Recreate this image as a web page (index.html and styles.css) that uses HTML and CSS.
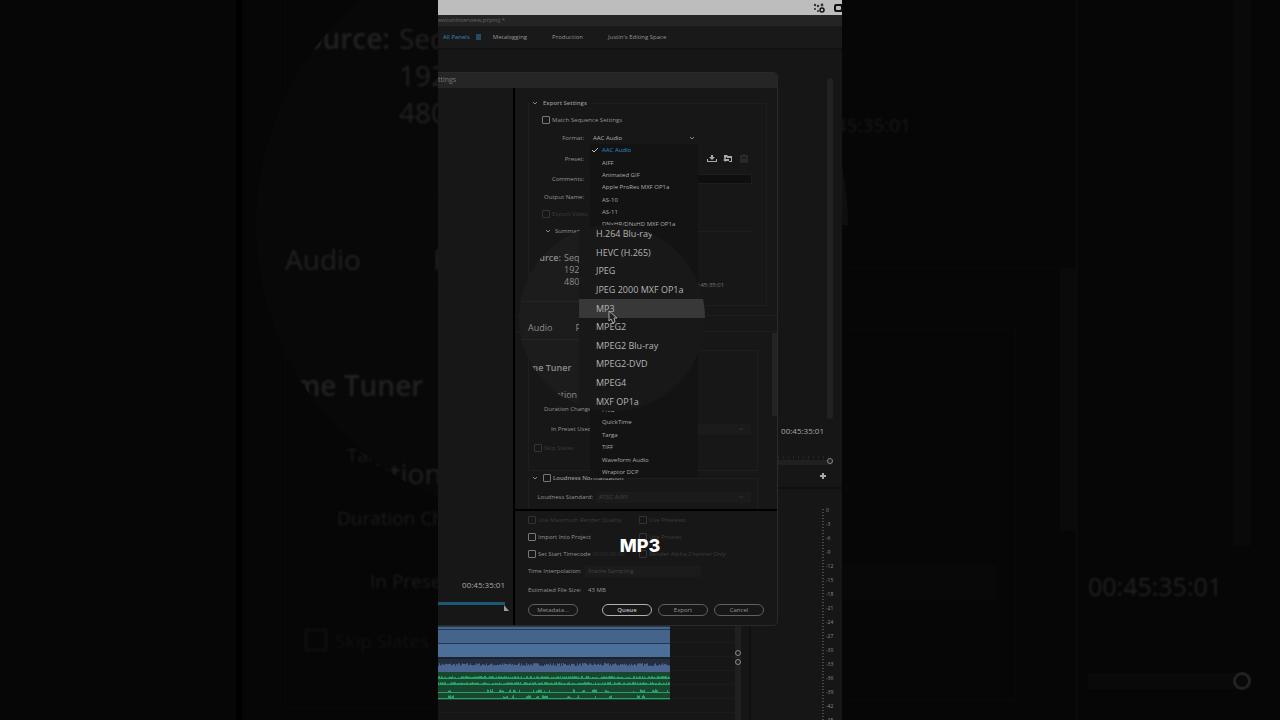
FILE: index.html
```
<!DOCTYPE html>
<html lang="en">
<head>
    <meta charset="UTF-8">
    <meta name="viewport" content="width=device-width, initial-scale=1.0">
    <title>Export Settings</title>
    <link rel="stylesheet" href="styles.css">
</head>
<body>
    <div class="page">
        <aside class="side side-left" aria-hidden="true">
            <div class="side-pane"></div>
            <div class="side-form">
                <div class="side-row target">Target</div>
                <div class="side-row duration">Duration Change:</div>
                <div class="side-row preset">In Preset Used:</div>
                <div class="side-row slates"><span class="side-box"></span>Skip Slates</div>
            </div>
            <div class="side-lens">
                <div class="side-source"><b>Source:</b><span>Sequence</span><span></span><span>1920x1080</span><span></span><span>48000 Hz</span></div>
                <div class="side-tabs"><span>Audio</span><span>Publish</span></div>
                <div class="side-tuner">Time Tuner</div>
                <div class="side-ration">Duration</div>
            </div>
        </aside>

        <main class="stage">
            <div class="menubar">
                <svg width="12" height="12" viewBox="0 0 12 12">
                    <g fill="#333"><circle cx="2" cy="3" r="1.2"/><circle cx="5" cy="4" r="1.2"/><circle cx="9" cy="3" r="1.4"/><circle cx="2" cy="7" r="1.1"/><circle cx="5" cy="9" r="1.1"/></g>
                    <circle cx="9" cy="8" r="2" fill="none" stroke="#111" stroke-width="1.5"/>
                </svg>
                <svg width="9" height="12" viewBox="0 0 9 12">
                    <rect x="1" y="2" width="12" height="8" rx="2" fill="#111"/>
                    <rect x="3" y="4" width="5" height="4" rx="1" fill="#bbb"/>
                </svg>
            </div>
            <div class="titlebar">ewtonInterview.prproj *</div>
            <nav class="workspaces">
                <a href="#all" class="active">All Panels
                    <svg width="5" height="6" viewBox="0 0 5 6"><path d="M0 1h5M0 3h5M0 5h5" stroke="#2c7fb0"/></svg>
                </a>
                <a href="#metalogging">Metalogging</a>
                <a href="#production">Production</a>
                <a href="#justin">Justin's Editing Space</a>
            </nav>
            <section class="monitor">
                <div class="monitor-scroll"></div>
                <div class="timecode">00:45:35:01</div>
                <div class="ruler"><span class="ring"></span></div>
                <button class="plus" aria-label="Button editor">
                    <svg width="8" height="8" viewBox="0 0 8 8"><path d="M4 1v6M1 4h6" stroke="#aaa" stroke-width="2"/></svg>
                </button>
            </section>
            <section class="lower">
                <div class="timeline">
                    <div class="clips">
                        <div class="clip thin"></div>
                        <div class="clip video"></div>
                        <div class="clip video second"></div>
                        <div class="clip-gap"></div>
                        <svg class="wave" id="wave" viewBox="0 0 232 41" preserveAspectRatio="none"></svg>
                    </div>
                </div>
                <div class="track-scroll"><span class="ring"></span><span class="ring"></span></div>
                <div class="meter">
                    <div class="ticks"></div>
                    <ol>
                        <li>0</li><li>-3</li><li>-6</li><li>-9</li><li>-12</li><li>-15</li><li>-18</li><li>-21</li>
                        <li>-24</li><li>-27</li><li>-30</li><li>-33</li><li>-36</li><li>-39</li><li>-42</li><li>-45</li>
                    </ol>
                </div>
            </section>

            <div class="dialog" role="dialog" aria-label="Export Settings">
                <div class="dialog-title">ttings</div>
                <div class="dialog-body">
                    <div class="source">
                        <div class="timecode">00:45:35:01</div>
                        <div class="range"></div>
                        <svg class="handle" width="5" height="6" viewBox="0 0 5 6"><path d="M0 0l5 6H0z" fill="#999"/></svg>
                    </div>
                    <div class="settings">
                        <div class="scroll">
                            <fieldset class="export">
                                <legend><svg class="chev" width="6" height="4" viewBox="0 0 6 4"><path d="M1 1l2 2 2-2"/></svg>Export Settings</legend>
                                <label class="check"><input type="checkbox">Match Sequence Settings</label>
                                <div class="field">
                                    <label for="format">Format:</label>
                                    <select id="format" class="format"><option>AAC Audio</option></select>
                                    <svg class="chev select-chev" width="6" height="4" viewBox="0 0 6 4"><path d="M1 1l2 2 2-2"/></svg>
                                </div>
                                <div class="field">
                                    <label for="preset">Preset:</label>
                                    <select id="preset" class="hidden-field"><option></option></select>
                                    <div class="icons">
                                        <svg width="10" height="9" viewBox="0 0 10 9"><path d="M4 1h2v2h2L5 6 2 3h2z" fill="#aaa"/><path d="M0 5h1v2h8V5h1v3H0z" fill="#aaa"/></svg>
                                        <svg width="10" height="9" viewBox="0 0 10 9"><path d="M1 1h3l1 1h4v6H6V7h2V4H4V3L1 5z" fill="#aaa"/><path d="M0 6l3-2v1h3v2H3v1z" fill="#aaa"/></svg>
                                        <svg width="10" height="9" viewBox="0 0 10 9"><path d="M1 2h8M4 1h2M2 2v6h6V2M4 4v3M6 4v3" fill="none" stroke="#3a3a3a"/></svg>
                                    </div>
                                </div>
                                <div class="field">
                                    <label for="comments">Comments:</label>
                                    <input type="text" id="comments" class="comments">
                                </div>
                                <div class="field"><label>Output Name:</label></div>
                                <label class="check off"><input type="checkbox" disabled>Export Video</label>
                                <div class="summary"><svg class="chev" width="6" height="4" viewBox="0 0 6 4"><path d="M1 1l2 2 2-2"/></svg>Summary</div>
                                <div class="length">00:45:35:01</div>
                            </fieldset>
                            <div class="tabs"></div>
                            <div class="audio">
                                <fieldset class="tuner">
                                    <div class="field"><label>Target</label></div>
                                    <div class="field"><label>Duration Change:</label></div>
                                    <div class="field">
                                        <label for="used">In Preset Used:</label>
                                        <select id="used" class="faint-select" disabled><option></option></select>
                                        <svg class="chev select-chev faint" width="6" height="4" viewBox="0 0 6 4"><path d="M1 1l2 2 2-2"/></svg>
                                    </div>
                                    <label class="check off"><input type="checkbox" disabled>Skip Slates</label>
                                </fieldset>
                                <fieldset class="loudness">
                                    <legend><svg class="chev" width="6" height="4" viewBox="0 0 6 4"><path d="M1 1l2 2 2-2"/></svg><label class="tick"><input type="checkbox">Loudness Normalization</label></legend>
                                    <div class="field">
                                        <label for="standard">Loudness Standard:</label>
                                        <select id="standard" class="faint-select" disabled><option>ATSC A/85</option></select>
                                        <svg class="chev select-chev faint" width="6" height="4" viewBox="0 0 6 4"><path d="M1 1l2 2 2-2"/></svg>
                                    </div>
                                </fieldset>
                                <div class="audio-scroll"></div>
                            </div>
                        </div>
                        <div class="bottom">
                            <div class="options">
                                <label class="tick off"><input type="checkbox" disabled>Use Maximum Render Quality</label>
                                <label class="tick off"><input type="checkbox" disabled>Use Previews</label>
                                <label class="tick"><input type="checkbox">Import Into Project</label>
                                <label class="tick off"><input type="checkbox" disabled>Use Proxies</label>
                                <label class="tick"><input type="checkbox">Set Start Timecode <span class="dim">00:00:00:00</span></label>
                                <label class="tick off"><input type="checkbox" disabled>Render Alpha Channel Only</label>
                            </div>
                            <div class="interpolation">
                                <label for="interp">Time Interpolation:</label>
                                <select id="interp" class="faint-select" disabled><option>Frame Sampling</option></select>
                            </div>
                            <div class="size"><span>Estimated File Size:</span><span>43 MB</span></div>
                            <div class="buttons">
                                <button class="meta">Metadata...</button>
                                <button class="queue">Queue</button>
                                <button>Export</button>
                                <button>Cancel</button>
                            </div>
                        </div>
                    </div>
                </div>
            </div>

            <ul class="menu">
                <li class="selected"><svg width="6" height="6" viewBox="0 0 6 6"><path d="M0 3l2 2 4-4" fill="none" stroke="#bbb"/></svg>AAC Audio</li>
                <li>AIFF</li>
                <li>Animated GIF</li>
                <li>Apple ProRes MXF OP1a</li>
                <li>AS-10</li>
                <li>AS-11</li>
                <li>DNxHR/DNxHD MXF OP1a</li>
                <li>DPX</li>
                <li>GIF</li>
                <li>H.264</li>
                <li>H.264 Blu-ray</li>
                <li>HEVC (H.265)</li>
                <li>JPEG</li>
                <li>JPEG 2000 MXF OP1a</li>
                <li>MP3</li>
                <li>MPEG2</li>
                <li>MPEG2 Blu-ray</li>
                <li>MPEG2-DVD</li>
                <li>MPEG4</li>
                <li>MXF OP1a</li>
                <li>OpenEXR</li>
                <li>PNG</li>
                <li>QuickTime</li>
                <li>Targa</li>
                <li>TIFF</li>
                <li>Waveform Audio</li>
                <li>Wraptor DCP</li>
            </ul>

            <div class="lens">
                <div class="lens-left">
                    <div class="lens-source"><b>Source:</b><span>Sequence</span><span></span><span>1920x1080</span><span></span><span>48000 Hz</span></div>
                    <div class="lens-tabs"><span>Audio</span><span>Publish</span></div>
                    <div class="lens-tuner">Time Tuner</div>
                    <div class="lens-duration">Duration</div>
                </div>
                <ul class="lens-menu">
                    <li>H.264 Blu-ray</li>
                    <li>HEVC (H.265)</li>
                    <li>JPEG</li>
                    <li>JPEG 2000 MXF OP1a</li>
                    <li class="hover">MP3</li>
                    <li>MPEG2</li>
                    <li>MPEG2 Blu-ray</li>
                    <li>MPEG2-DVD</li>
                    <li>MPEG4</li>
                    <li>MXF OP1a</li>
                </ul>
                <svg class="cursor" width="10" height="14" viewBox="0 0 10 14"><path d="M1 1v10l2-2 2 4 2-1-1-4h3z" fill="#222" stroke="#aaa"/></svg>
            </div>

            <div class="caption">MP3</div>
        </main>

        <aside class="side side-right" aria-hidden="true">
            <div class="right-dialog">
                <div class="right-export">45:35:01</div>
                <div class="right-audio">
                    <div class="right-box"><div class="right-select"></div></div>
                    <div class="right-scroll"></div>
                </div>
            </div>
            <div class="right-monitor">
                <div class="right-bar"></div>
                <div class="right-time">00:45:35:01</div>
                <div class="right-ruler"><span class="right-ring"></span></div>
            </div>
            <div class="right-lens"></div>
        </aside>
    </div>
    <script src="script.js"></script>
</body>
</html>
```
FILE: styles.css
```
* {
    box-sizing: border-box;
}
body {
    margin: 0;
    background-color: #060606;
    color: #949494;
    font-family: "Open Sans", "Noto Sans", sans-serif;
    font-size: 6px;
    line-height: 10px;
}
ul, ol {
    list-style: none;
    margin: 0;
    padding: 0;
}
a {
    color: inherit;
    text-decoration: none;
}
button, input, select {
    font: inherit;
    color: inherit;
}
.page {
    display: grid;
    grid-template-columns: 438fr 404fr 438fr;
    height: 100vh;
    min-height: 720px;
    overflow: hidden;
}

/* dark enlarged backdrop on both sides */
.side {
    position: relative;
    display: flex;
    overflow: hidden;
    color: #1c1c1c;
    font-size: 19px;
    line-height: 24px;
    white-space: nowrap;
}
.side-row, .side-source, .side-tabs, .side-tuner, .side-ration, .right-time, .right-export {
    filter: blur(1px);
}
.side-pane {
    flex: 0 0 242px;
    border-right: 6px solid #000;
}
.side-form {
    flex: 1;
    margin: 0 0 12px 43px;
    padding-top: 443px;
    border-left: 1px solid #090909;
    border-bottom: 1px solid #090909;
}
.side-row {
    height: 63px;
    display: flex;
    align-items: flex-start;
    gap: 8px;
}
.target {
    padding-left: 61px;
}
.duration {
    padding-left: 51px;
}
.preset {
    padding-left: 84px;
    height: 60px;
}
.slates {
    padding-left: 19px;
    color: #121212;
}
.side-box {
    width: 22px;
    height: 22px;
    border: 2px solid #121212;
}
.side-lens {
    position: absolute;
    left: 256px;
    top: -70px;
    width: 590px;
    height: 590px;
    padding-top: 90px;
    border-radius: 50%;
    overflow: hidden;
    background-color: #080808;
    color: #222;
    font-size: 28px;
    font-weight: 500;
    line-height: 37px;
}
.side-source {
    display: grid;
    grid-template-columns: 134px 1fr;
    grid-auto-rows: 37px;
    column-gap: 9px;
    height: 175px;
    border-bottom: 1px solid #0c0c0c;
}
.side-source b {
    text-align: right;
    font-weight: 600;
}
.side-tabs {
    display: flex;
    gap: 72px;
    height: 88px;
    padding: 46px 0 0 29px;
    border-bottom: 1px solid #0c0c0c;
}
.side-tuner {
    padding: 84px 0 0 14px;
    height: 172px;
    font-weight: 600;
}
.side-ration {
    padding-left: 70px;
}
.right-dialog {
    flex: 0 0 236px;
    border-right: 2px solid #0a0a0a;
}
.right-export {
    display: flex;
    justify-content: flex-end;
    height: 190px;
    width: 195px;
    margin-top: -50px;
    padding: 163px 125px 0 0;
    border: 1px solid #090909;
    border-width: 0 1px 1px 0;
    color: #191919;
}
.right-audio {
    display: flex;
    justify-content: space-between;
    height: 440px;
    margin-top: 128px;
    border-top: 1px solid #090909;
}
.right-box {
    width: 174px;
    height: 372px;
    margin-top: 60px;
    padding-top: 235px;
    border: 1px solid #090909;
    border-left: 0;
}
.right-select {
    width: 154px;
    height: 34px;
    background-color: #080808;
}
.right-scroll {
    width: 16px;
    height: 262px;
    background-color: #0a0a0a;
}
.right-monitor {
    flex: 1;
    padding: 0 29px 0 10px;
    display: flex;
    flex-direction: column;
}
.right-bar {
    align-self: flex-end;
    width: 18px;
    height: 546px;
    background-color: #090909;
}
.right-time {
    height: 78px;
    padding-top: 28px;
    font-size: 25px;
    font-weight: 500;
    color: #222;
}
.right-ruler {
    display: flex;
    align-items: center;
    justify-content: flex-end;
    height: 16px;
    margin-top: 49px;
    background-color: #090909;
}
.right-ring {
    width: 18px;
    height: 18px;
    border: 3px solid #222;
    border-radius: 50%;
}
.right-lens {
    position: absolute;
    left: -584px;
    top: -70px;
    width: 590px;
    height: 295px;
    border-radius: 295px 295px 0 0;
    border-right: 7px solid #0f0f0f;
}

/* editor */
.stage {
    position: relative;
    display: flex;
    flex-direction: column;
    overflow: hidden;
    background-color: #161616;
    white-space: nowrap;
}
.menubar {
    display: flex;
    justify-content: flex-end;
    align-items: center;
    gap: 8px;
    height: 15px;
    flex: none;
    background-color: #bdbdbd;
}
.titlebar {
    height: 11px;
    flex: none;
    background-color: #242424;
    color: #666;
}
.workspaces {
    display: flex;
    align-items: center;
    height: 24px;
    flex: none;
    padding-left: 5px;
    border-bottom: 2px solid #111;
    background-color: #191919;
}
.workspaces a {
    margin-right: 25px;
}
.workspaces .active {
    display: flex;
    align-items: center;
    gap: 6px;
    margin-right: 12px;
    color: #2c8cc4;
}
.monitor {
    display: flex;
    flex-direction: column;
    align-items: flex-end;
    flex: none;
    padding: 28px 9px 0 0;
    height: 439px;
    border-bottom: 2px solid #0f0f0f;
}
.monitor-scroll {
    width: 6px;
    height: 341px;
    border-radius: 3px;
    background-color: #222;
}
.timecode {
    color: #a8a8a8;
    font-size: 8px;
}
.monitor .timecode {
    margin: 7px 9px 20px 0;
}
.ruler {
    display: flex;
    align-items: center;
    justify-content: flex-end;
    width: 55px;
    height: 9px;
    background: repeating-linear-gradient(90deg, #242424 0 1px, transparent 1px 5px) top / 100% 3px no-repeat, linear-gradient(#202020, #202020) bottom / 100% 5px no-repeat;
}
.ring {
    width: 6px;
    height: 6px;
    border: 1px solid #888;
    border-radius: 50%;
}
.plus {
    display: flex;
    margin: 7px 6px 0 0;
    padding: 0;
    border: 0;
    background: none;
}
.lower {
    display: flex;
    flex: 1;
    overflow: hidden;
}
.timeline {
    flex: 1;
    padding: 137px 65px 0 0;
    background: repeating-linear-gradient(#161616 0 13px, #1b1b1b 13px 14px);
}
.clip {
    height: 14px;
    border-top: 1px solid #28384f;
    background-color: #45648c;
}
.clip.thin {
    height: 3px;
}
.clip.second {
    background-color: #4b6f99;
}
.clip-gap {
    height: 2px;
    background-color: #1c222b;
}
.wave {
    display: block;
    width: 100%;
    height: 41px;
}
.track-scroll {
    display: flex;
    flex-direction: column;
    align-items: center;
    gap: 3px;
    width: 6px;
    padding-top: 161px;
    background-color: #202020;
}
.meter {
    display: flex;
    justify-content: flex-end;
    width: 93px;
    padding: 16px 3px 0 0;
    margin-left: 8px;
    border-left: 2px solid #101010;
}
.ticks {
    width: 2px;
    margin-top: 4px;
    background: repeating-linear-gradient(#4a4a4a 0 1px, transparent 1px 3px);
}
.meter ol {
    width: 13px;
    margin-left: 2px;
    font-size: 5px;
    color: #8c8c8c;
}
.meter li {
    height: 14px;
}

/* export dialog */
.dialog {
    position: absolute;
    left: 0;
    right: 64px;
    top: 72px;
    border: 1px solid #2a2a2a;
    border-left: 0;
    border-radius: 0 5px 5px 0;
    overflow: hidden;
    background-color: #171717;
}
.dialog-title {
    height: 15px;
    padding-top: 2px;
    background-color: #252525;
    color: #777;
    font-size: 7px;
}
.dialog-body {
    display: flex;
}
.source {
    display: flex;
    flex-direction: column;
    align-items: flex-end;
    flex: 1;
    padding: 492px 8px 0 0;
    border-right: 2px solid #000;
}
.range {
    align-self: stretch;
    height: 3px;
    margin-top: 12px;
    background-color: #1b5873;
}
.handle {
    margin-right: -4px;
}
.settings {
    width: 262px;
}
.scroll {
    height: 421px;
    overflow: hidden;
    padding: 8px 0 0 13px;
}
fieldset {
    margin: 0;
    padding: 0;
    min-width: 0;
    border: 1px solid #1e1e1e;
}
legend {
    display: flex;
    align-items: center;
    gap: 5px;
    height: 14px;
    padding: 0 3px;
    font-weight: 600;
}
.chev {
    flex: none;
    fill: none;
    stroke: #888;
}
.select-chev {
    margin-left: -16px;
    pointer-events: none;
}
.select-chev.faint {
    stroke: #303030;
}
.export {
    display: grid;
    grid-template-rows: 19px 18px 23px 17px 19px 16px 18px 65px;
    width: 239px;
}
.check, .tick {
    display: flex;
    align-items: center;
    gap: 2px;
}
.check {
    padding-left: 13px;
}
input[type="checkbox"] {
    appearance: none;
    flex: none;
    width: 8px;
    height: 8px;
    margin: 0;
    border: 1px solid #777;
    border-radius: 1px;
}
.off {
    color: #3c3c3c;
}
.off input[type="checkbox"] {
    border-color: #343434;
}
.field {
    display: flex;
    align-items: center;
    gap: 6px;
}
.field label {
    flex: none;
    width: 55px;
    text-align: right;
}
select {
    appearance: none;
    flex: none;
    border: 0;
    padding: 0 3px;
    background: none;
    opacity: 1;
}
.format {
    width: 109px;
    height: 12px;
    color: #b0b0b0;
}
.hidden-field {
    width: 109px;
    height: 10px;
}
.icons {
    display: flex;
    gap: 6px;
    margin-left: 2px;
}
.comments {
    width: 162px;
    height: 10px;
    border: 1px solid #1d1d1d;
    background-color: #0e0e0e;
}
.summary {
    display: flex;
    align-items: center;
    gap: 4px;
    padding-left: 16px;
    margin-right: 14px;
}
.summary::after {
    content: "";
    flex: 1;
    border-top: 1px solid #1e1e1e;
}
.length {
    align-self: center;
    padding: 24px 0 0 163px;
    color: #777;
}
.tabs {
    height: 17px;
    margin: 9px 0 0 -13px;
    border: 1px solid #1e1e1e;
    border-width: 1px 0;
}
.audio {
    position: relative;
    padding-top: 18px;
}
.audio-scroll {
    position: absolute;
    right: 0;
    top: 1px;
    width: 5px;
    height: 83px;
    background-color: #242424;
}
.tuner {
    display: grid;
    grid-template-rows: 20px 20px 20px 18px;
    width: 230px;
    height: 121px;
    padding-top: 28px;
}
.tuner .field, .loudness .field {
    gap: 3px;
}
.tuner .field label, .loudness .field label {
    width: 64px;
}
.tuner .check {
    padding-left: 5px;
}
.loudness {
    width: 230px;
    height: 60px;
}
.loudness .field {
    height: 24px;
}
.faint-select {
    width: 155px;
    height: 11px;
    color: #424242;
    background-color: #1b1b1b;
}
.bottom {
    padding: 0 13px 9px;
    border-top: 2px solid #000;
}
.options {
    display: grid;
    grid-template-columns: 111px 1fr;
    grid-auto-rows: 17px;
}
.dim {
    color: #343434;
}
.interpolation {
    display: flex;
    align-items: center;
    gap: 4px;
    height: 18px;
}
.interpolation .faint-select {
    width: 116px;
}
.size {
    display: flex;
    align-items: center;
    gap: 7px;
    height: 20px;
}
.buttons {
    display: flex;
    gap: 6px;
    padding-top: 4px;
}
.buttons button {
    flex: none;
    width: 50px;
    height: 12px;
    padding: 0;
    border: 1px solid #606060;
    border-radius: 6px;
    background: none;
}
.buttons .meta {
    margin-right: 18px;
}
.buttons .queue {
    border-color: #b0b0b0;
    color: #c0c0c0;
    font-weight: 600;
}

/* open format list */
.menu {
    position: absolute;
    left: 152px;
    top: 144px;
    width: 108px;
    height: 334px;
    display: flex;
    flex-direction: column;
    background-color: #131313;
    color: #ababab;
}
.menu li {
    flex: 1;
    display: flex;
    align-items: center;
    padding-left: 12px;
}
.menu .selected {
    gap: 4px;
    padding-left: 2px;
    color: #2c8cc4;
}

/* magnifier */
.lens {
    position: absolute;
    left: 81px;
    top: 225px;
    display: flex;
    width: 186px;
    height: 186px;
    border-radius: 50%;
    overflow: hidden;
    background-color: #1c1c1c;
    color: #b4b4b4;
    font-size: 9px;
    font-weight: 500;
    line-height: 12px;
}
.lens-left {
    width: 60px;
    overflow: hidden;
    padding-top: 27px;
    color: #8c8c8c;
}
.lens-source {
    display: grid;
    grid-template-columns: 42px 1fr;
    grid-auto-rows: 12px;
    column-gap: 3px;
    height: 50px;
    border-bottom: 1px solid #242424;
}
.lens-source b {
    text-align: right;
    font-weight: 600;
}
.lens-tabs {
    display: flex;
    gap: 23px;
    height: 38px;
    padding: 20px 0 0 9px;
    border-bottom: 1px solid #242424;
}
.lens-tuner {
    height: 49px;
    padding: 22px 0 0 3px;
    font-weight: 600;
}
.lens-duration {
    padding-left: 21px;
}
.lens-menu {
    flex: 1;
    display: flex;
    flex-direction: column;
    background-color: #181818;
}
.lens-menu li {
    flex: 1;
    display: flex;
    align-items: center;
    padding-left: 17px;
}
.lens-menu .hover {
    background-color: #383838;
}
.cursor {
    position: absolute;
    left: 89px;
    top: 85px;
}
.caption {
    position: absolute;
    left: 0;
    right: 0;
    top: 533px;
    text-align: center;
    color: #fff;
    font-family: Inter, sans-serif;
    font-size: 18px;
    font-weight: 800;
    line-height: 25px;
}
```
FILE: script.js
```
// audio waveforms under the timeline clips
const wave = document.getElementById("wave");
let seed = 7;

function rand() {
    seed = (seed * 16807) % 2147483647;
    return seed / 2147483647;
}

function rect(y, height, color) {
    return `<rect x="0" y="${y}" width="232" height="${height}" fill="${color}"/>`;
}

function bars(base, color, heightAt) {
    let d = "";
    for (let x = 0; x < 232; x++) {
        const h = heightAt(x);
        d += `M${x} ${base}v${-h}h1v${h}z`;
    }
    return `<path d="${d}" fill="${color}"/>`;
}

let html = rect(0, 13, "#232e40") + bars(13, "#4b6590", () => 6 + rand() * 3);
html += rect(13, 28, "#17482f");
[20, 26].forEach(base => {
    html += bars(base, "#2ba068", () => 1 + rand() * 2);
});
[34, 40].forEach(base => {
    let burst = 0;
    html += bars(base, "#2ba068", () => {
        if (burst > 0) {
            burst--;
            return 2 + rand() * 2;
        }
        if (rand() < 0.06) burst = Math.floor(rand() * 7);
        return 1;
    });
});
wave.innerHTML = html;
```
